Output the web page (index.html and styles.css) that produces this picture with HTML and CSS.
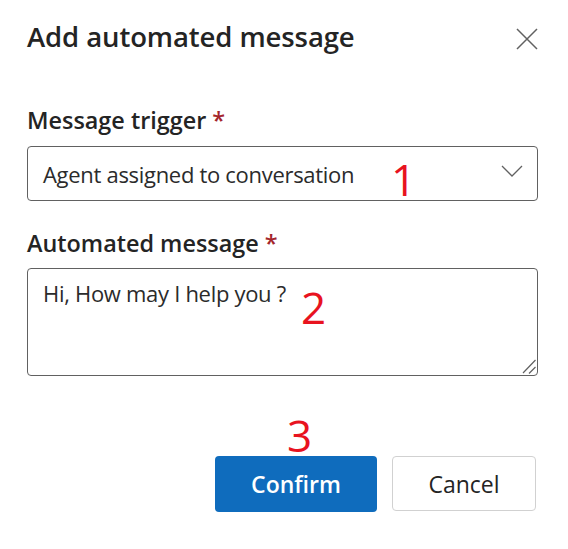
FILE: index.html
```html
<!DOCTYPE html>
<html lang="en">
<head>
<meta charset="utf-8">
<title>Add automated message</title>
<link rel="stylesheet" href="styles.css">
</head>
<body>
<div class="dialog">
  <header class="header">
    <h1 class="title">Add automated message</h1>
    <button class="close" aria-label="Close">
      <svg width="22" height="22" viewBox="0 0 22 22"><path d="M1 1 L21 21 M21 1 L1 21" stroke="#616161" stroke-width="1.5" fill="none"/></svg>
    </button>
  </header>

  <div class="field field-trigger">
    <label class="label">Message trigger <span class="req">*</span></label>
    <div class="select">
      <span class="select-text">Agent assigned to conversation</span>
      <span class="mark mark-1">1</span>
      <svg class="chevron" width="22" height="12" viewBox="0 0 22 12"><path d="M1 1 L11 11 L21 1" stroke="#616161" stroke-width="1.3" fill="none"/></svg>
    </div>
  </div>

  <div class="field field-message">
    <label class="label">Automated message <span class="req">*</span></label>
    <div class="textarea">
      <span class="ta-text">Hi, How may I help you ?</span>
      <span class="mark mark-2">2</span>
      <svg class="grip" width="14" height="15" viewBox="0 0 14 15"><path d="M13.5 1 L1 14 M13.5 8 L7 14.5" stroke="#616161" stroke-width="1.2" fill="none"/></svg>
    </div>
  </div>

  <footer class="footer">
    <div class="confirm-wrap">
      <span class="mark mark-3">3</span>
      <button class="btn btn-primary">Confirm</button>
    </div>
    <button class="btn btn-secondary">Cancel</button>
  </footer>
</div>
</body>
</html>
```

FILE: styles.css
```css
* { box-sizing: border-box; }
html, body { margin: 0; padding: 0; background: #ffffff; }
body {
  font-family: "Open Sans", "Noto Sans", sans-serif;
  color: #242424;
}
.dialog {
  width: 568px;
  height: 549px;
  padding: 19px 30px 0 27px;
}
.header {
  display: flex;
  align-items: flex-start;
  justify-content: space-between;
  height: 36px;
}
.title {
  margin: 0;
  font-size: 27.5px;
  line-height: 36px;
  font-weight: 600;
  letter-spacing: -0.1px;
  color: #242424;
}
.close {
  border: none;
  background: none;
  padding: 0;
  width: 22px;
  height: 22px;
  margin-top: 9px;
}
.close svg { display: block; }
.field-trigger { margin-top: 51px; }
.field-message { margin-top: 28px; }
.label {
  display: block;
  font-size: 23.4px;
  font-weight: 600;
  line-height: 28px;
  color: #242424;
}
.req { color: #a4262c; }
.select {
  margin-top: 12px;
  height: 55px;
  border: 1px solid #616161;
  border-radius: 4px;
  display: flex;
  align-items: center;
  padding: 0 14px 0 15px;
  position: relative;
}
.select-text, .ta-text {
  font-size: 22px;
  letter-spacing: -0.3px;
  color: #2b2b2b;
}
.mark {
  color: #e8131f;
  font-family: "Open Sans", sans-serif;
  font-weight: 400;
  font-size: 44px;
  position: absolute;
  line-height: 1;
}
.mark-1 { left: 363px; top: 10px; }
.chevron { margin-left: auto; margin-top: -5px; }
.textarea {
  margin-top: 11px;
  height: 108px;
  border: 1px solid #616161;
  border-radius: 4px;
  padding: 9px 15px;
  position: relative;
}
.mark-2 { left: 273px; top: 16px; }
.grip { position: absolute; right: 1px; bottom: 1px; }
.footer {
  margin-top: 80px;
  display: flex;
  justify-content: flex-end;
  gap: 15px;
  padding-right: 2px;
}
.confirm-wrap { position: relative; }
.mark-3 { left: 72px; top: -43px; }
.btn {
  height: 56px;
  border-radius: 4px;
  font-family: "Open Sans", sans-serif;
  font-size: 23px;
  font-weight: 600;
  display: block;
}
.btn-primary {
  width: 162px;
  background: #0f6cbd;
  color: #ffffff;
  border: none;
}
.btn-secondary {
  width: 144px;
  height: 55px;
  background: #ffffff;
  color: #242424;
  border: 1px solid #d1d1d1;
  font-weight: 500;
}
```
